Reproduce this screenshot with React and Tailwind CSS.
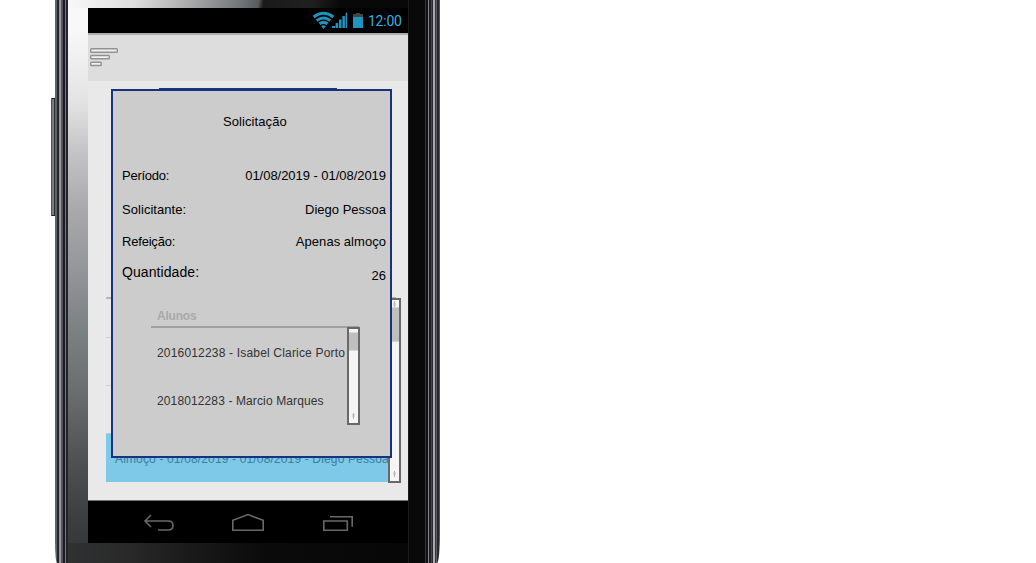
import React from "react";

const details = [
  { label: "Período:", value: "01/08/2019 - 01/08/2019", row: "h-[34px]", labelStyle: "tracking-[-0.25px]", valueStyle: "tracking-[-0.04px]" },
  { label: "Solicitante:", value: "Diego Pessoa", row: "h-[33px]", labelStyle: "tracking-[0.05px]", valueStyle: "" },
  { label: "Refeição:", value: "Apenas almoço", row: "h-[31px]", labelStyle: "tracking-[-0.2px]", valueStyle: "tracking-[0.04px]" },
];

function ScrollArrow({ up }) {
  return (
    <svg width="7" height="8" viewBox="0 0 7 8" className={up ? "shrink-0" : "shrink-0 rotate-180"}>
      <path d="M3.5 1v6" stroke="#b0b0b0" strokeWidth="1" />
      <path d="M2 3h3v3H2z" fill="#bbb" opacity=".5" />
    </svg>
  );
}

function StatusBar() {
  return (
    <div className="flex h-[25px] items-center justify-end bg-black pr-[6px]">
      <svg width="52" height="25" viewBox="0 0 52 25" className="shrink-0">
        <g fill="none" stroke="#2094bd" strokeWidth="3">
          <path d="M1.6 9Q11.5 1.6 21.4 9" />
          <path d="M4.7 12.6Q11.5 7.4 18.3 12.6" />
          <path d="M7.5 15.8Q11.5 12.9 15.5 15.8" />
        </g>
        <path d="M9.1 18Q11.5 16.4 13.9 18L11.5 21z" fill="#2094bd" />
        <path d="M20 18h3v2h-3zM23.6 15h2.6v5h-2.6zM27 11.5h2.6V20H27zM30.4 8h2.5v12h-2.5zM33.6 5.5l1.4-1.5v16h-1.4z" fill="#2094bd" />
        <path d="M44 5h4v1h3v3H41V6h3z" fill="#444" />
        <path d="M41 9h10v11H41z" fill="#2094bd" />
      </svg>
      <span className="ml-[4px] w-[34px] whitespace-nowrap pt-[1px] font-['Roboto',sans-serif] text-[14px] leading-[25px] tracking-[-0.25px] text-[#35b0e0]">
        12:00
      </span>
    </div>
  );
}

function Header() {
  return (
    <div className="h-[48px] border-t-2 border-[#aeaeae] bg-[#dddddd] pt-[12px] pl-[2px]">
      <svg width="30" height="22" viewBox="0 0 30 22" fill="#f1f1f1" stroke="#929292" strokeWidth="1.4">
        <rect x=".7" y="1.7" width="26.6" height="3.6" rx=".8" />
        <rect x=".7" y="8.5" width="18.6" height="3.2" rx=".8" />
        <rect x=".7" y="15.2" width="10.5" height="3.3" rx=".8" />
      </svg>
    </div>
  );
}

function RequestList() {
  return (
    <div className="ml-[18px] flex w-[295px] flex-col pt-[216px]">
      <div className="relative h-[186px] w-[295px]">
        <div className="mr-[5px] h-[41px] border-t-2 border-[#b5b5b5]" />
        <div className="-mt-px mr-[5px] h-[48px] border-t border-[#cfcfcf]" />
        <div className="mr-[5px] h-[48px] border-t border-[#cfcfcf]" />
        <div className="h-[49px] w-[283px] overflow-hidden whitespace-nowrap border-t border-[#bcc9d0] bg-[#7ec8e8] pl-[9px] text-[12px] leading-[50px] tracking-[0.15px] text-[#397f9c]">
          Almoço - 01/08/2019 - 01/08/2019 - Diego Pessoa
        </div>
        <div className="absolute top-[1px] right-0 flex h-[185px] w-[13px] flex-col items-center border-2 border-[#686868] bg-[#f5f5f5]">
          <div className="flex h-[7px] items-center"><ScrollArrow up /></div>
          <div className="h-[35px] w-full border-y border-[#d4d4d4] bg-[#bfbfbf]" />
          <div className="mt-auto pb-[3px]"><ScrollArrow /></div>
        </div>
      </div>
    </div>
  );
}

function Dialog() {
  return (
    <div
      role="dialog"
      className="absolute top-[8px] left-[23px] h-[369px] w-[281px] border-2 border-[#18327f] bg-[#cccccc] px-[9px] text-[13px] text-black"
    >
      <div className="absolute top-[-3px] left-[46px] h-[2px] w-[178px] bg-[#18327f]" />
      <h1 className="mt-[23px] mb-[29px] h-[16px] pl-[101px] leading-[16px] tracking-[0.08px]">Solicitação</h1>
      <div className="w-[264px]">
        {details.map((d) => (
          <div key={d.label} className={`flex items-center justify-between whitespace-nowrap ${d.row}`}>
            <span className={d.labelStyle}>{d.label}</span>
            <span className={d.valueStyle}>{d.value}</span>
          </div>
        ))}
        <div className="flex h-[32px] items-start justify-between">
          <span className="text-[14px] leading-[30px] tracking-[0.08px]">Quantidade:</span>
          <span className="pt-[4px] leading-[30px]">26</span>
        </div>
      </div>
      <div className="mt-[18px] ml-[29px] w-[209px]">
        <div className="h-[21px] w-[208px] border-b-2 border-[#a0a0a0] pl-[6px] text-[12px] font-bold leading-[18px] tracking-[-0.2px] text-[#a9a9a9]">
          Alunos
        </div>
        <div className="-mt-px flex h-[98px] justify-between">
          <ul className="whitespace-nowrap pl-[6px] text-[12px] text-[#333]">
            <li className="h-[48px] leading-[52px] tracking-[0.18px]">2016012238 - Isabel Clarice Porto</li>
            <li className="h-[48px] leading-[52px] tracking-[0.12px]">2018012283 - Marcio Marques</li>
          </ul>
          <div className="flex w-[13px] shrink-0 flex-col items-center border-2 border-[#686868] bg-[#f5f5f5] pt-[3px]">
            <div className="h-[19px] w-full border-y border-[#d9d9d9] bg-[#bfbfbf]" />
            <div className="mt-auto pb-[3px]"><ScrollArrow /></div>
          </div>
        </div>
      </div>
    </div>
  );
}

function NavBar() {
  return (
    <div className="h-[43px] border-t border-[#707572] bg-black">
      <svg width="320" height="42" viewBox="0 0 320 42" fill="none" stroke="#686868" strokeWidth="1.6">
        <path d="M63 14l-6 6 6 6M57 20h23q5 0 5 4.5t-5 4.5H70" />
        <path d="M144.8 29.2V19.3L160 13.5l15.2 5.8v9.9z" />
        <path d="M235.8 20h23.5v9.2h-23.5zM242 15.7h22.2v10" />
      </svg>
    </div>
  );
}

export default function App() {
  return (
    <main className="flex h-[563px] w-[1036px] overflow-hidden bg-white pl-[50px] font-['Liberation_Sans',Arial,sans-serif]">
      <div className="flex w-[5px] shrink-0 flex-col items-end pt-[98px]">
        <div className="h-[118px] w-[4px] rounded-l-[1px] border-y border-[#222] bg-[linear-gradient(90deg,#4b5352_0_1px,#78807e_1px_3px,#333_3px)]" />
      </div>
      <div className="w-[13px] shrink-0 rounded-bl-[2px_24px] bg-[linear-gradient(90deg,#5c636a_0_2px,#22252a_2px_4px,#9a969c_4px_6px,#56555b_6px_8px,#191a24_8px_10px,#79777d_10px_11px,#222329_11px)]" />
      <div className="flex w-[340px] shrink-0 flex-col bg-[linear-gradient(174deg,#f8f8f8_30px,#e2e2e2_105px,#c5c5c9_150px,#a9a8ad_210px,#97999d_260px,#7d8285_325px,#686c6f_395px,#505356_455px,#3c3e41_515px,#313235_568px,#2c2c2e_590px)]">
        <div className="h-[8px] shrink-0 bg-[linear-gradient(100deg,#f8f8f8_0px,#dfdfdf_65px,#aaa_120px,#71767a_170px,#575c60_188px,#1a1a1a_193px,#202020_240px,#080808_270px,#080808_340px)]" />
        <div className="flex h-[535px] shrink-0 pl-[20px]">
          <div className="flex w-[320px] shrink-0 flex-col">
            <StatusBar />
            <Header />
            <div className="relative h-[419px] bg-[#e9e9e9]">
              <RequestList />
              <Dialog />
            </div>
            <NavBar />
          </div>
        </div>
        <div className="h-[20px] shrink-0 bg-[linear-gradient(90deg,#303133_0px,#292929_60px,#1a1a1a_120px,#0a0a0a_200px,#070707_340px)]" />
      </div>
      <div className="w-[32px] shrink-0 rounded-br-[3px_30px] bg-[linear-gradient(90deg,#1c1c1c_0_1px,#090909_1px_17px,#343436_17px_18px,#101012_18px_20px,#858589_20px_21px,#202024_21px_23px,#454548_23px_24px,#29292d_24px_25px,#aaaab0_25px_27px,#35353a_27px_28px,#5d5d62_28px_29px,#28282c_29px_31px,#55555a_31px)]" />
    </main>
  );
}
